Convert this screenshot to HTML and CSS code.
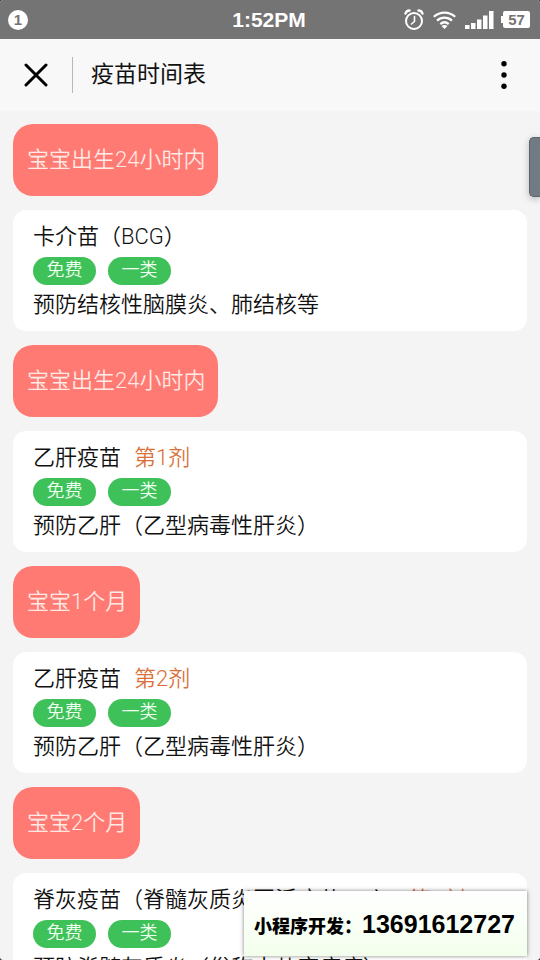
FILE: index.html
```html
<!DOCTYPE html>
<html lang="zh-CN">
<head>
<meta charset="utf-8">
<meta name="viewport" content="width=device-width, initial-scale=1">
<title>疫苗时间表</title>
<link rel="stylesheet" href="styles.css">
</head>
<body>
<div class="screen">
  <div class="status">
    <span class="status-count">1</span>
    <span class="status-time">1:52PM</span>
    <div class="status-icons">
      <svg width="20" height="22" viewBox="0 0 20 22" fill="none" stroke="#fff" stroke-width="2" stroke-linecap="round" aria-hidden="true">
        <circle cx="10" cy="12" r="8"/>
        <path d="M10.500 7.500v5l-3 2.500" stroke-width="1.600"/>
        <path d="M1.500 4.500C2 2.800 3.500 1.500 5.500 1.500M18.500 4.500C18 2.800 16.500 1.500 14.500 1.500" stroke-width="2.400"/>
      </svg>
      <svg width="23" height="18" viewBox="0 0 23 18" fill="none" stroke="#fff" stroke-width="2.200" aria-hidden="true">
        <path d="M.8 5.800C7 .1 16 .1 22.200 5.800M4 9.600c4.300-4 10.700-4 15 0M7.300 13.100c2.500-2.200 5.900-2.200 8.400 0"/>
        <path d="M11.500 18l-3-3c1.800-1.500 4.200-1.500 6 0z" fill="#fff" stroke="none"/>
      </svg>
      <svg width="29" height="18" viewBox="0 0 29 18" fill="#fff" aria-hidden="true">
        <path d="M0 14h4.500v4H0zM6 12h4.500v6H6zM12 8.500h4.500V18H12zM18 4.500h4.500V18H18zM24 0h4.500v18H24z"/>
      </svg>
      <span class="battery">57</span>
    </div>
  </div>

  <header class="nav">
    <button class="nav-close" type="button" aria-label="关闭">
      <svg width="24" height="24" viewBox="0 0 24 24" fill="none" stroke="#000" stroke-width="3" stroke-linecap="round"><path d="M2 2l20 20M22 2L2 22"/></svg>
    </button>
    <h1 class="nav-title">疫苗时间表</h1>
    <button class="nav-more" type="button" aria-label="更多">
      <svg width="6" height="28" viewBox="0 0 6 28"><circle cx="3" cy="2.700" r="2.700"/><circle cx="3" cy="14" r="2.700"/><circle cx="3" cy="25.300" r="2.700"/></svg>
    </button>
  </header>

  <main class="list">
    <h2 class="age">宝宝出生24小时内</h2>
    <article class="card">
      <h3 class="name">卡介苗（BCG）</h3>
      <div class="badges"><span class="badge">免费</span><span class="badge">一类</span></div>
      <p class="desc">预防结核性脑膜炎、肺结核等</p>
    </article>

    <h2 class="age">宝宝出生24小时内</h2>
    <article class="card">
      <h3 class="name">乙肝疫苗<span class="dose">第1剂</span></h3>
      <div class="badges"><span class="badge">免费</span><span class="badge">一类</span></div>
      <p class="desc">预防乙肝（乙型病毒性肝炎）</p>
    </article>

    <h2 class="age">宝宝1个月</h2>
    <article class="card">
      <h3 class="name">乙肝疫苗<span class="dose">第2剂</span></h3>
      <div class="badges"><span class="badge">免费</span><span class="badge">一类</span></div>
      <p class="desc">预防乙肝（乙型病毒性肝炎）</p>
    </article>

    <h2 class="age">宝宝2个月</h2>
    <article class="card">
      <h3 class="name">脊灰疫苗（脊髓灰质炎灭活疫苗IPV）<span class="dose">第1剂</span></h3>
      <div class="badges"><span class="badge">免费</span><span class="badge">一类</span></div>
      <p class="desc">预防脊髓灰质炎（俗称小儿麻痹症）</p>
    </article>
  </main>

  <div class="handle"></div>
  <aside class="banner"><span class="banner-label">小程序开发：</span><span class="banner-phone">13691612727</span></aside>
</div>
</body>
</html>
```
FILE: styles.css
```css
* {
  box-sizing: border-box;
}

body {
  margin: 0;
  background: #222;
  color: #111;
  font-family: Roboto, "Noto Sans CJK SC", sans-serif;
}

h1, h2, h3, p {
  margin: 0;
}

button {
  display: flex;
  align-items: center;
  justify-content: center;
  padding: 0;
  border: 0;
  background: none;
}

.screen {
  position: relative;
  display: flex;
  flex-direction: column;
  height: 100vh;
  overflow: hidden;
  border-radius: 3px;
  background: #f4f4f4;
}

.status {
  display: grid;
  grid-template-columns: 1fr auto 1fr;
  align-items: center;
  flex: none;
  height: 39px;
  padding: 0 10px 0 8px;
  background: #747474;
  color: #fff;
  font-family: "Liberation Sans", sans-serif;
}

.status-count {
  width: 20px;
  height: 20px;
  border-radius: 50%;
  background: #fff;
  color: #747474;
  font-size: 15px;
  font-weight: 700;
  line-height: 20px;
  text-align: center;
}

.status-time {
  font-size: 21px;
  font-weight: 700;
}

.status-icons {
  display: flex;
  align-items: center;
  justify-content: flex-end;
  gap: 9px;
}

.battery {
  position: relative;
  width: 27px;
  height: 17px;
  border-radius: 2px;
  background: #fff;
  color: #747474;
  font-size: 15px;
  font-weight: 700;
  line-height: 17px;
  text-align: center;
}

.battery::before {
  content: "";
  position: absolute;
  top: 5px;
  left: -2px;
  width: 2px;
  height: 7px;
  background: #fff;
}

.nav {
  display: flex;
  align-items: center;
  flex: none;
  height: 72px;
  padding-right: 26px;
  background: #f8f8f8;
}

.nav-close {
  width: 73px;
  height: 36px;
  border-right: 1px solid #b8b8b8;
}

.nav-title {
  flex: 1;
  padding-left: 18px;
  color: #111;
  font-size: 23px;
  font-weight: 400;
  line-height: 36px;
}

.nav-more {
  width: 20px;
  height: 36px;
}

.list {
  display: flex;
  flex: 1;
  flex-direction: column;
  align-items: flex-start;
  gap: 14px;
  min-height: 0;
  padding: 13px 13px 0;
  overflow-y: auto;
  scrollbar-width: none;
}

.age {
  flex: none;
  padding: 21px 13px 21px 14px;
  border-radius: 20px;
  background: #ff7a73;
  color: #ffe9e4;
  font-size: 22px;
  font-weight: 350;
  line-height: 30px;
}

.card {
  display: flex;
  flex: none;
  flex-direction: column;
  gap: 5px;
  align-self: stretch;
  padding: 12px 20px 11px;
  border-radius: 13px;
  background: #fff;
}

.name,
.desc {
  font-size: 22px;
  font-weight: 350;
  line-height: 30px;
  white-space: nowrap;
}

.dose {
  margin-left: 13px;
  color: #d9703a;
}

.badges {
  display: flex;
  gap: 12px;
}

.badge {
  width: 63px;
  height: 28px;
  border-radius: 14px;
  background: #3fc159;
  color: #effff0;
  font-size: 18px;
  font-weight: 350;
  line-height: 26px;
  text-align: center;
}

.handle {
  position: absolute;
  top: 137px;
  right: 0;
  width: 11px;
  height: 60px;
  border: 1px solid #5d656c;
  border-right: 0;
  border-radius: 5px 0 0 5px;
  background: #727b84;
  box-shadow: 0 2px 7px rgba(0, 0, 0, 0.25);
}

.banner {
  position: absolute;
  right: 13px;
  bottom: 4px;
  display: flex;
  align-items: center;
  height: 65px;
  padding: 2px 12px 0 10px;
  background: linear-gradient(#fff, #f3ffec);
  box-shadow: 0 0 4px rgba(0, 0, 0, 0.5);
  color: #000;
  font-family: "Liberation Sans", "Noto Sans CJK SC", sans-serif;
  white-space: nowrap;
}

.banner-label {
  font-size: 18px;
  font-weight: 900;
}

.banner-phone {
  font-size: 25px;
  font-weight: 700;
}
```
